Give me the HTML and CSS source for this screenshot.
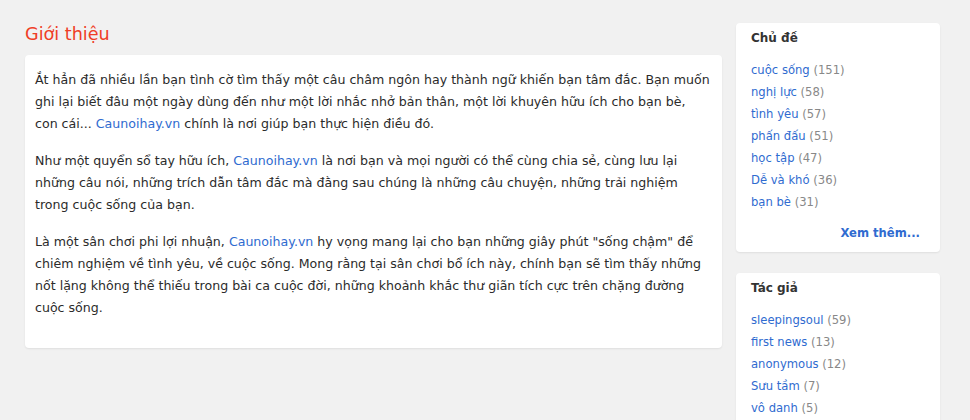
FILE: index.html
```html
<!DOCTYPE html>
<html lang="vi">
<head>
<meta charset="utf-8">
<title>Giới thiệu</title>
<link rel="stylesheet" href="styles.css">
</head>
<body>
<div class="page">
  <main class="main">
    <h2 class="title">Giới thiệu</h2>
    <div class="card intro">
      <p>Ắt hẳn đã nhiều lần bạn tình cờ tìm thấy một câu châm ngôn hay thành ngữ khiến bạn tâm đắc. Bạn muốn ghi lại biết đâu một ngày dùng đến như một lời nhắc nhở bản thân, một lời khuyên hữu ích cho bạn bè, con cái... <a href="#">Caunoihay.vn</a> chính là nơi giúp bạn thực hiện điều đó.</p>
      <p>Như một quyển sổ tay hữu ích, <a href="#">Caunoihay.vn</a> là nơi bạn và mọi người có thể cùng chia sẻ, cùng lưu lại những câu nói, những trích dẫn tâm đắc mà đằng sau chúng là những câu chuyện, những trải nghiệm trong cuộc sống của bạn.</p>
      <p>Là một sân chơi phi lợi nhuận, <a href="#">Caunoihay.vn</a> hy vọng mang lại cho bạn những giây phút "sống chậm" để chiêm nghiệm về tình yêu, về cuộc sống. Mong rằng tại sân chơi bổ ích này, chính bạn sẽ tìm thấy những nốt lặng không thể thiếu trong bài ca cuộc đời, những khoảnh khắc thư giãn tích cực trên chặng đường cuộc sống.</p>
    </div>
  </main>
  <aside class="sidebar">
    <section class="card box">
      <h3 class="box-title">Chủ đề</h3>
      <ul class="list">
        <li><a href="#">cuộc sống</a> <span class="count">(151)</span></li>
        <li><a href="#">nghị lực</a> <span class="count">(58)</span></li>
        <li><a href="#">tình yêu</a> <span class="count">(57)</span></li>
        <li><a href="#">phấn đấu</a> <span class="count">(51)</span></li>
        <li><a href="#">học tập</a> <span class="count">(47)</span></li>
        <li><a href="#">Dễ và khó</a> <span class="count">(36)</span></li>
        <li><a href="#">bạn bè</a> <span class="count">(31)</span></li>
      </ul>
      <div class="more"><a href="#">Xem thêm...</a></div>
    </section>
    <section class="card box">
      <h3 class="box-title">Tác giả</h3>
      <ul class="list">
        <li><a href="#">sleepingsoul</a> <span class="count">(59)</span></li>
        <li><a href="#">first news</a> <span class="count">(13)</span></li>
        <li><a href="#">anonymous</a> <span class="count">(12)</span></li>
        <li><a href="#">Sưu tầm</a> <span class="count">(7)</span></li>
        <li><a href="#">vô danh</a> <span class="count">(5)</span></li>
      </ul>
    </section>
  </aside>
</div>
</body>
</html>
```

FILE: styles.css
```css
html, body {
  margin: 0;
  padding: 0;
}
body {
  background: #f1f1f1;
  font-family: "DejaVu Sans", Verdana, sans-serif;
  color: #2b2b2b;
  height: 420px;
  overflow: hidden;
}
a {
  color: #2f6bd0;
  text-decoration: none;
}
.page {
  display: flex;
  align-items: flex-start;
  gap: 14px;
  padding: 23px 30px 0 25px;
}
.main {
  width: 697px;
  flex: none;
}
.title {
  margin: 0 0 10px;
  font-size: 17.6px;
  line-height: 22px;
  font-weight: normal;
  color: #ef3e26;
}
.card {
  background: #fff;
  border-radius: 4px;
  box-shadow: 0 1px 2px rgba(0, 0, 0, 0.08);
}
.intro {
  padding: 14px 10px;
  font-size: 12.6px;
  line-height: 22px;
}
.intro p {
  margin: 0 0 15px;
}
.sidebar {
  width: 204px;
  flex: none;
  display: flex;
  flex-direction: column;
  gap: 21px;
}
.box {
  padding: 6px 15px 9px;
  font-size: 11.6px;
}
.box-title {
  margin: 0 0 12px;
  font-size: 12px;
  line-height: 18px;
  font-weight: bold;
  color: #333;
}
.list {
  list-style: none;
  margin: 0;
  padding: 0;
  line-height: 22px;
}
.count {
  color: #888;
}
.more {
  text-align: right;
  padding-right: 5px;
  margin-top: 10px;
  line-height: 20px;
  font-weight: bold;
}
```
